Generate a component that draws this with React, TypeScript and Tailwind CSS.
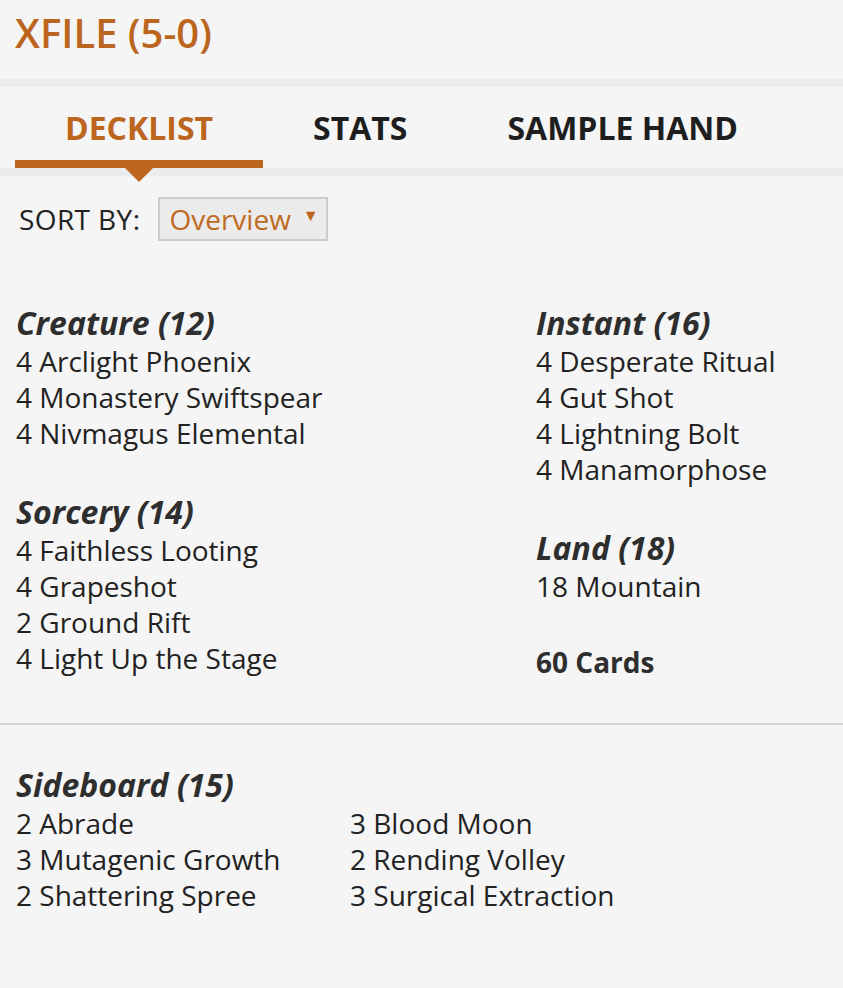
const creature = ["4 Arclight Phoenix", "4 Monastery Swiftspear", "4 Nivmagus Elemental"];
const sorcery = ["4 Faithless Looting", "4 Grapeshot", "2 Ground Rift", "4 Light Up the Stage"];
const instant = ["4 Desperate Ritual", "4 Gut Shot", "4 Lightning Bolt", "4 Manamorphose"];
const land = ["18 Mountain"];
const sideLeft = ["2 Abrade", "3 Mutagenic Growth", "2 Shattering Spree"];
const sideRight = ["3 Blood Moon", "2 Rending Volley", "3 Surgical Extraction"];

function CardList({ cards }: { cards: string[] }) {
  return (
    <ul>
      {cards.map((c) => (
        <li key={c} className="text-[28px] leading-[36px] text-[#222]">
          {c}
        </li>
      ))}
    </ul>
  );
}

function Group({ title, cards }: { title: string; cards: string[] }) {
  return (
    <div>
      <h3 className="text-[32px] font-bold italic leading-[40px] text-[#2e2e2e]">{title}</h3>
      <CardList cards={cards} />
    </div>
  );
}

export default function App() {
  const tabs = ["DECKLIST", "STATS", "SAMPLE HAND"];

  return (
    <div className="min-h-[988px] bg-[#f5f5f5] font-['Open_Sans',sans-serif]">
      <h1 className="px-[15px] pt-[5px] pb-[18px] text-[40px] font-semibold leading-[56px] text-[#bb651e]">
        XFILE (5-0)
      </h1>
      <div className="h-[8px] bg-[#ebebeb]" />
      <nav className="flex pl-[15px]">
        {tabs.map((t, i) => (
          <div key={t} className="relative">
            <button
              type="button"
              className={
                i === 0
                  ? "h-[81px] border-b-[8px] border-[#bb651e] px-[50px] pt-[9px] text-[32px] font-bold text-[#bb651e]"
                  : "h-[81px] border-b-[8px] border-transparent px-[50px] pt-[9px] text-[32px] font-bold text-[#1e1e1e]"
              }
            >
              {t}
            </button>
            {i === 0 && (
              <span className="absolute left-1/2 top-full z-10 -translate-x-1/2 border-x-[14px] border-t-[14px] border-x-transparent border-t-[#bb651e]" />
            )}
          </div>
        ))}
      </nav>
      <div className="h-[8px] bg-[#ebebeb]" />

      <div className="flex items-center gap-[18px] px-[19px] pt-[21px]">
        <span className="text-[28px] leading-[36px] tracking-[0.4px] text-[#222]">SORT BY:</span>
        <div className="flex h-[44px] w-[170px] items-center border-2 border-[#cbcbcb] bg-[#ebebeb] pl-[9px]">
          <span className="text-[28px] leading-[36px] text-[#bf6a22]">Overview</span>
          <span className="ml-[12px] -mt-[8px] text-[16px] text-[#bb651e]">▼</span>
        </div>
      </div>

      <div className="grid grid-cols-[520px_1fr] px-[16px] pt-[62px]">
        <div className="flex flex-col gap-[41px]">
          <Group title="Creature (12)" cards={creature} />
          <Group title="Sorcery (14)" cards={sorcery} />
        </div>
        <div className="flex flex-col">
          <Group title="Instant (16)" cards={instant} />
          <div className="mt-[41px]">
            <Group title="Land (18)" cards={land} />
          </div>
          <p className="mt-[40px] text-[28px] font-bold leading-[36px] text-[#2e2e2e]">60 Cards</p>
        </div>
      </div>

      <hr className="mt-[43px] border-t-2 border-[#d2d2d2]" />

      <div className="px-[16px] pt-[40px]">
        <h3 className="text-[32px] font-bold italic leading-[40px] text-[#2e2e2e]">Sideboard (15)</h3>
        <div className="grid grid-cols-[334px_1fr]">
          <CardList cards={sideLeft} />
          <CardList cards={sideRight} />
        </div>
      </div>
    </div>
  );
}
